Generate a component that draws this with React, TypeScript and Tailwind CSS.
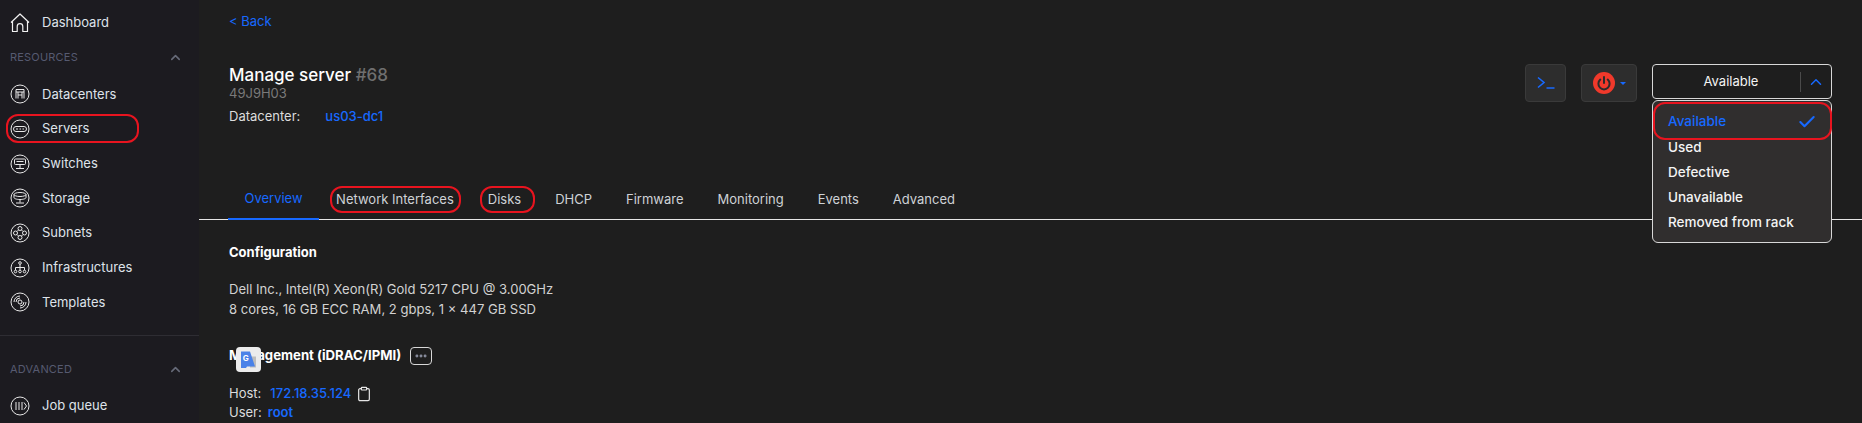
import type { ReactNode } from "react";
import { ChevronUp, Check, Clipboard, Ellipsis } from "lucide-react";

function Ring({ children }: { children: ReactNode }) {
  return (
    <svg width="20" height="20" viewBox="0 0 20 20" fill="none" stroke="#e8e8e8" strokeWidth="1" className="shrink-0">
      <circle cx="10" cy="10" r="9" />
      {children}
    </svg>
  );
}

const icons: Record<string, ReactNode> = {
  Datacenters: (
    <Ring>
      <path d="M6 14.5V5.5h8v9M6 8h8M8 8v6.5M12 8v6.5M8 11h4" />
    </Ring>
  ),
  Servers: (
    <Ring>
      <rect x="3.5" y="7.5" width="13" height="5" rx="2.5" />
      <path d="M6 10h2M9.5 10h1.5M12.5 10h1.5" />
    </Ring>
  ),
  Switches: (
    <Ring>
      <rect x="4.5" y="5" width="11" height="5.5" rx="1" />
      <path d="M6.5 7.5h7M10 10.5v4M6 14.5h8" />
    </Ring>
  ),
  Storage: (
    <Ring>
      <ellipse cx="10" cy="6.5" rx="6" ry="2" />
      <path d="M4 6.5v3c0 1.2 2.7 2 6 2s6-.8 6-2v-3M10 11.5v3M6 15h8" />
    </Ring>
  ),
  Subnets: (
    <Ring>
      <circle cx="10" cy="5.5" r="2" />
      <circle cx="10" cy="14.5" r="2" />
      <circle cx="5.5" cy="10" r="2" />
      <circle cx="14.5" cy="10" r="2" />
      <path d="M7 8.5l1.5-1.5M11.5 7L13 8.5M13 11.5L11.5 13M8.5 13L7 11.5" />
    </Ring>
  ),
  Infrastructures: (
    <Ring>
      <circle cx="10" cy="5" r="1.3" />
      <circle cx="5.5" cy="13.5" r="1.3" />
      <circle cx="10" cy="13.5" r="1.3" />
      <circle cx="14.5" cy="13.5" r="1.3" />
      <path d="M10 6.3v5.9M5.5 12.2V9.5h9v2.7" />
    </Ring>
  ),
  Templates: (
    <Ring>
      <circle cx="10" cy="10" r="2" />
      <path d="M4 10a6 6 0 0 1 6-6M6 10a4 4 0 0 1 4-4M16 10a6 6 0 0 1-6 6M14 10a4 4 0 0 1-4 4" />
    </Ring>
  ),
  "Job queue": (
    <Ring>
      <path d="M6 6v8M9 6v8M12 6v8M14 6.5l2.5 3.5L14 13.5" />
    </Ring>
  ),
};

function NavItem({ label }: { label: string }) {
  return (
    <div className="flex h-[34.7px] items-center gap-[12px] pl-[10px] text-[13px] text-[#dfe3ea]">
      {icons[label]}
      <span>{label}</span>
    </div>
  );
}

function NavHeading({ label }: { label: string }) {
  return (
    <div className="flex h-[20px] items-center justify-between pl-[10px] pr-[16px] text-[11px] tracking-[0.2px] text-[#565a70]">
      <span>{label}</span>
      <ChevronUp size={15} strokeWidth={2.5} color="#666a78" />
    </div>
  );
}

function Sidebar() {
  return (
    <aside className="flex h-full w-[199px] shrink-0 flex-col bg-[#1c1b20]">
      <div className="flex h-[40px] items-center gap-[12px] pl-[10px] pt-[6px] text-[13px] text-[#dfe3ea]">
        <svg width="20" height="20" viewBox="0 0 20 20" fill="none" stroke="#f2f2f2" strokeWidth="1.2" strokeLinejoin="round">
          <path d="M1 9.5L10 1l9 8.5M2.5 8.2V18.5h4.7v-5a2.8 2.8 0 0 1 5.6 0v5h4.7V8.2" />
        </svg>
        <span>Dashboard</span>
      </div>
      <div className="mt-[8px]">
        <NavHeading label="RESOURCES" />
      </div>
      <div className="mt-[9.5px]">
        {["Datacenters", "Servers", "Switches", "Storage", "Subnets", "Infrastructures", "Templates"].map((l) => (
          <NavItem key={l} label={l} />
        ))}
      </div>
      <div className="mt-[15.5px] h-px bg-[#2e2d33]" />
      <div className="mt-[23px]">
        <NavHeading label="ADVANCED" />
      </div>
      <div className="mt-[9px]">
        <NavItem label="Job queue" />
      </div>
    </aside>
  );
}

function PowerIcon() {
  return (
    <svg width="22" height="22" viewBox="0 0 22 22" fill="none">
      <circle cx="11" cy="11" r="11" fill="#f0392b" />
      <path d="M7.3 7.6a5.6 5.6 0 1 0 7.4 0M11 5v6" stroke="#2b2b2b" strokeWidth="2" strokeLinecap="round" />
    </svg>
  );
}

function StatusSelect() {
  return (
    <div className="relative w-[180px]">
      <div className="flex h-[35px] items-center rounded-[4px] border border-[#d8d8d8] bg-[#1e1e1e] text-[13px] text-[#f4f4f4]">
        <span className="flex-1 pl-[9px] text-center">Available</span>
        <span className="h-[20px] w-px bg-[#4a4a4a]" />
        <span className="flex w-[30px] justify-center">
          <ChevronUp size={18} strokeWidth={2} color="#1769ff" />
        </span>
      </div>
      <div className="absolute left-0 top-[36px] z-10 h-[143px] w-[180px] rounded-[6px] border border-[#d8d8d8] bg-[#302e2e] pt-[8px] text-[13.5px] font-medium text-[#f4f4f4]">
        <div className="flex h-[25px] items-center justify-between px-[15px] text-[#1769ff]">
          <span>Available</span>
          <Check size={20} strokeWidth={2.5} className="-mr-[1px]" />
        </div>
        {["Used", "Defective", "Unavailable", "Removed from rack"].map((s, i) => (
          <div key={s} className={`flex h-[25px] items-center px-[15px] ${i === 0 ? "mt-[1px]" : ""}`}>
            {s}
          </div>
        ))}
      </div>
    </div>
  );
}

const tabs = ["Overview", "Network Interfaces", "Disks", "DHCP", "Firmware", "Monitoring", "Events", "Advanced"];

function Tabs() {
  return (
    <div className="mt-[55px] flex h-[40px] border-b border-[#e6e6e6] pl-[29px] text-[13px] text-[#cfd2d6]">
      {tabs.map((t, i) => (
        <div
          key={t}
          className={
            i === 0
              ? "-mb-px flex items-center border-b-2 border-[#1769ff] px-[16.5px] text-[#1769ff]"
              : "flex items-center px-[17px]"
          }
        >
          {t}
        </div>
      ))}
    </div>
  );
}

// hand-drawn red marks from the screenshot
function Annotation({ className }: { className: string }) {
  return <div className={`pointer-events-none absolute z-20 rounded-[12px] border-[2.5px] border-[#e8141f] ${className}`} />;
}

export default function App() {
  return (
    <div
      className="relative flex h-[423px] w-[1862px] overflow-hidden bg-[#1e1e1e] text-[13px] text-[#dcdcdc]"
      style={{ fontFamily: "Inter, 'Noto Sans', sans-serif" }}
    >
      <Sidebar />
      <main className="min-w-0 flex-1">
        <div className="flex justify-between pl-[30px] pr-[30px] pt-[12px]">
          <div>
            <div className="text-[13px] leading-[18px] text-[#1769ff]">&lt; Back</div>
            <h1 className="mt-[35px] text-[17px] font-medium leading-[20px] text-white">
              Manage server <span className="text-[#6f6f6f]">#68</span>
            </h1>
            <div className="text-[13px] leading-[16px] text-[#7a7a7a]">49J9H03</div>
            <div className="mt-[6px] flex gap-[25px] leading-[18px]">
              <span>Datacenter:</span>
              <span className="font-medium text-[#1769ff]">us03-dc1</span>
            </div>
          </div>
          <div className="mt-[52px] flex items-start">
            <div className="flex h-[38px] w-[41px] items-center justify-center rounded-[4px] border border-[#3a3a3a] bg-[#2d2d2d]">
              <svg width="18" height="14" viewBox="0 0 18 14" fill="none" stroke="#1769ff" strokeWidth="1.6">
                <path d="M1 1.5L7 6.5L1 11.5M9.5 12h8" />
              </svg>
            </div>
            <div className="ml-[15px] flex h-[38px] w-[56px] items-center justify-center gap-[5px] rounded-[4px] border border-[#3a3a3a] bg-[#2d2d2d]">
              <PowerIcon />
              <span className="h-0 w-0 border-x-[3px] border-t-[3px] border-x-transparent border-t-[#1769ff]" />
            </div>
            <div className="ml-[15px]">
              <StatusSelect />
            </div>
          </div>
        </div>
        <Tabs />
        <section className="pl-[30px] pt-[23px]">
          <h2 className="text-[13px] font-bold leading-[18px] text-white">Configuration</h2>
          <p className="mt-[18px] text-[13.05px] leading-[20px] text-[#d2d2d2]">
            Dell Inc., Intel(R) Xeon(R) Gold 5217 CPU @ 3.00GHz
            <br />
            8 cores, 16 GB ECC RAM, 2 gbps, 1 × 447 GB SSD
          </p>
          <div className="mt-[27px] flex h-[20px] items-center gap-[9px]">
            <h2 className="text-[13.2px] font-bold text-white">Management (iDRAC/IPMI)</h2>
            <span className="flex h-[18px] w-[22px] items-center justify-center rounded-[4px] border border-[#d8d8d8]">
              <Ellipsis size={14} strokeWidth={3} color="#8b8fa0" />
            </span>
          </div>
          <div className="mt-[18px] flex h-[19px] items-center gap-[9px]">
            <span>Host:</span>
            <span className="font-medium text-[#1769ff]">172.18.35.124</span>
            <Clipboard size={16} strokeWidth={1.8} color="#e6e6e6" className="-ml-[4px]" />
          </div>
          <div className="flex h-[19px] items-center gap-[6px]">
            <span>User:</span>
            <span className="font-semibold text-[#1769ff]">root</span>
          </div>
        </section>
      </main>

      {/* translate extension bubble */}
      <div className="absolute left-[236px] top-[347px] z-20 flex h-[25px] w-[25px] items-center justify-center rounded-[4px] bg-[#ececec]">
        <svg width="19" height="19" viewBox="0 0 19 19">
          <path d="M11 6.5h6v11h-6z" fill="#bdbdbd" />
          <path d="M2 1.5h9l5 15H8l-1 1.5H2z" fill="#4a82e8" />
          <text x="3.8" y="11" fontSize="8" fontWeight="700" fill="#ffffff" fontFamily="Inter, sans-serif">G</text>
        </svg>
      </div>

      <Annotation className="left-[6px] top-[114px] h-[29px] w-[133px]" />
      <Annotation className="left-[330px] top-[186px] h-[27px] w-[131px]" />
      <Annotation className="left-[480px] top-[186px] h-[27px] w-[55px]" />
      <Annotation className="left-[1653px] top-[102px] h-[38px] w-[179px]" />
    </div>
  );
}
